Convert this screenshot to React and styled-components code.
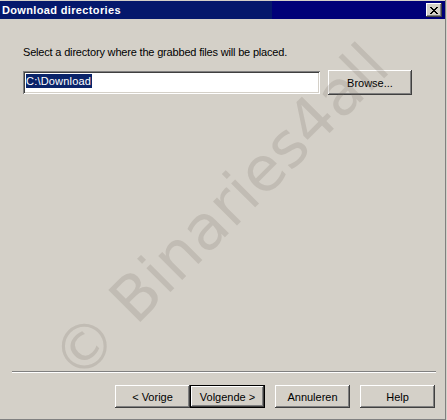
import React from 'react';
import styled, { createGlobalStyle, css } from 'styled-components';

const GlobalStyle = createGlobalStyle`
  html, body {
    margin: 0;
    padding: 0;
    background: #d4d0c8;
  }
  body {
    font-family: "Liberation Sans", Arial, sans-serif;
    font-size: 11px;
    color: #000;
  }
`;

const Frame = styled.div`
  position: relative;
  width: 445px;
  height: 418px;
  border-right: 1px solid #808080;
  border-bottom: 1px solid #808080;
  padding-top: 1px;
  background: #d4d0c8;
  display: flex;
  flex-direction: column;
  overflow: hidden;
`;

const TitleBar = styled.div`
  height: 18px;
  display: flex;
  align-items: center;
  justify-content: space-between;
  padding: 0 3px 0 2px;
  background: linear-gradient(to right, #05186c 0, #05186c 272px, #000078 272px, #000078 100%);
`;

const Title = styled.span`
  color: #fff;
  font-weight: bold;
  font-size: 11px;
  letter-spacing: 0.35px;
`;

const bevel = css`
  box-shadow:
    inset -1px -1px #404040,
    inset 1px 1px #ffffff,
    inset -2px -2px #808080,
    inset 2px 2px #d4d0c8;
`;

const CloseButton = styled.div`
  width: 16px;
  height: 14px;
  background: #d4d0c8;
  ${bevel};
  display: flex;
  align-items: center;
  justify-content: center;
`;

const Main = styled.div`
  flex: 1;
  padding: 27px 0 0 23px;
`;

const Prompt = styled.div`
  line-height: 13px;
  margin-bottom: 11px;
  letter-spacing: -0.18px;
`;

const PathRow = styled.div`
  display: flex;
  align-items: flex-start;
  gap: 8px;
`;

const PathField = styled.div`
  width: 297px;
  height: 23px;
  box-sizing: border-box;
  margin-top: 1px;
  background: #fff;
  padding: 3px 0 0 3px;
  box-shadow:
    inset 1px 1px #808080,
    inset -1px -1px #ffffff,
    inset 2px 2px #404040,
    inset -2px -2px #d4d0c8;
`;

const Selected = styled.span`
  display: inline-block;
  background: #0a246a;
  color: #fff;
  font-size: 11px;
  letter-spacing: 0.2px;
  line-height: 14px;
  padding-right: 1px;
`;

const Button = styled.button`
  font-family: "Liberation Sans", Arial, sans-serif;
  font-size: 11px;
  color: #000;
  background: #d4d0c8;
  width: ${p => p.$width || 75}px;
  height: ${p => p.$height || 23}px;
  padding: 0;
  margin: 0;
  border: none;
  ${bevel};
  ${p => p.$default && css`
    border: 1px solid #000;
  `}
`;

const Footer = styled.div`
  padding: 0 9px 11px 12px;
`;

const Separator = styled.div`
  height: 1px;
  background: #808080;
  border-bottom: 1px solid #ffffff;
`;

const ButtonRow = styled.div`
  display: flex;
  justify-content: flex-end;
  margin-top: 12px;
  padding-right: 1px;
`;

const ButtonGroup = styled.div`
  display: flex;
  margin-right: 10px;
`;

const Watermark = styled.div`
  position: absolute;
  left: 220px;
  top: 212px;
  transform: translate(-50%, -50%) rotate(-45deg);
  font-family: "DejaVu Sans", Verdana, sans-serif;
  font-size: 62px;
  white-space: nowrap;
  color: rgba(120, 110, 100, 0.2);
  pointer-events: none;
`;

const CLOSE_GLYPH = [
  'XX....XX',
  '.XX..XX.',
  '..XXXX..',
  '...XX...',
  '..XXXX..',
  '.XX..XX.',
  'XX....XX',
];

function CloseGlyph() {
  return (
    <svg width="8" height="7" viewBox="0 0 8 7" shapeRendering="crispEdges">
      {CLOSE_GLYPH.map((row, y) =>
        row.split('').map((c, x) =>
          c === 'X' ? <rect key={`${x}-${y}`} x={x} y={y} width="1" height="1" fill="#000" /> : null
        )
      )}
    </svg>
  );
}

export default function App() {
  return (
    <>
      <GlobalStyle />
      <Frame>
        <TitleBar>
          <Title>Download directories</Title>
          <CloseButton><CloseGlyph /></CloseButton>
        </TitleBar>
        <Main>
          <Prompt>Select a directory where the grabbed files will be placed.</Prompt>
          <PathRow>
            <PathField><Selected>C:\Download</Selected></PathField>
            <Button $width={84} $height={25}>Browse...</Button>
          </PathRow>
        </Main>
        <Footer>
          <Separator />
          <ButtonRow>
            <ButtonGroup>
              <Button>&lt; Vorige</Button>
              <Button $default>Volgende &gt;</Button>
            </ButtonGroup>
            <ButtonGroup>
              <Button>Annuleren</Button>
            </ButtonGroup>
            <Button>Help</Button>
          </ButtonRow>
        </Footer>
        <Watermark>© Binaries4all</Watermark>
      </Frame>
    </>
  );
}
